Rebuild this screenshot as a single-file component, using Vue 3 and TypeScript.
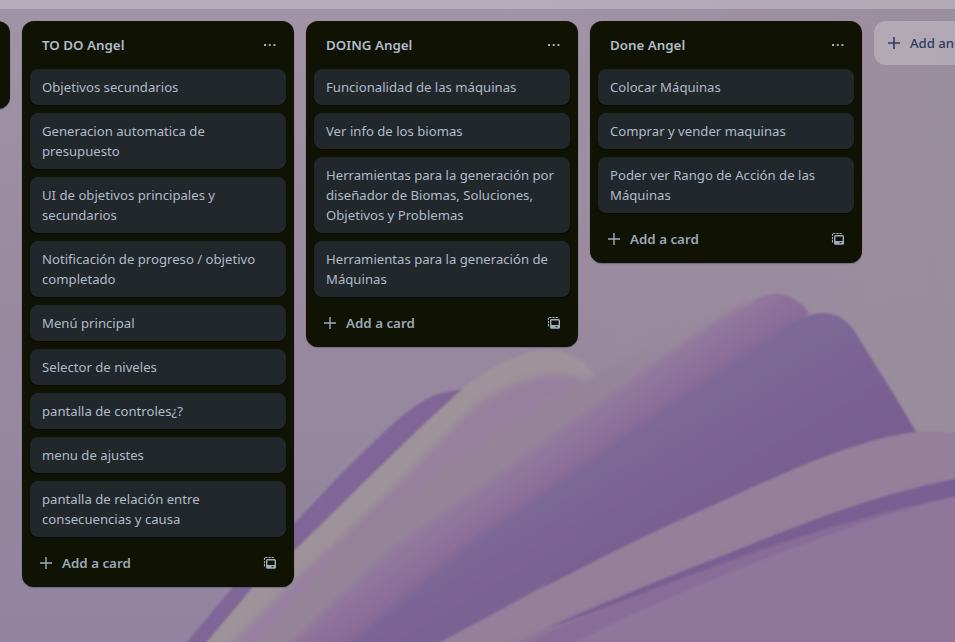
<script setup lang="ts">
interface Card { text: string }
interface List { title: string; cards: Card[] }

const lists: List[] = [
  {
    title: 'TO DO Angel',
    cards: [
      { text: 'Objetivos secundarios' },
      { text: 'Generacion automatica de\npresupuesto' },
      { text: 'UI de objetivos principales y\nsecundarios' },
      { text: 'Notificación de progreso / objetivo\ncompletado' },
      { text: 'Menú principal' },
      { text: 'Selector de niveles' },
      { text: 'pantalla de controles¿?' },
      { text: 'menu de ajustes' },
      { text: 'pantalla de relación entre\nconsecuencias y causa' },
    ],
  },
  {
    title: 'DOING Angel',
    cards: [
      { text: 'Funcionalidad de las máquinas' },
      { text: 'Ver info de los biomas' },
      { text: 'Herramientas para la generación por\ndiseñador de Biomas, Soluciones,\nObjetivos y Problemas' },
      { text: 'Herramientas para la generación de\nMáquinas' },
    ],
  },
  {
    title: 'Done Angel',
    cards: [
      { text: 'Colocar Máquinas' },
      { text: 'Comprar y vender maquinas' },
      { text: 'Poder ver Rango de Acción de las\nMáquinas' },
    ],
  },
]
</script>

<template>
  <div class="page">
    <svg class="wallpaper" viewBox="0 0 955 642" preserveAspectRatio="none" aria-hidden="true">
      <defs>
        <linearGradient id="sky" x1="0" y1="0" x2="0" y2="1">
          <stop offset="0" stop-color="#a194a6" />
          <stop offset=".5" stop-color="#99899f" />
          <stop offset="1" stop-color="#9284a0" />
        </linearGradient>
        <linearGradient id="skyRight" x1="0" y1="0" x2="1" y2="0">
          <stop offset=".55" stop-color="#998c9d" stop-opacity="0" />
          <stop offset="1" stop-color="#998e9d" stop-opacity=".9" />
        </linearGradient>
        <linearGradient id="pink" gradientUnits="userSpaceOnUse" x1="560" y1="430" x2="585" y2="465">
          <stop offset="0" stop-color="#93799e" />
          <stop offset="1" stop-color="#8b6c97" />
        </linearGradient>
        <linearGradient id="violet" gradientUnits="userSpaceOnUse" x1="680" y1="380" x2="750" y2="500">
          <stop offset="0" stop-color="#7e6a97" />
          <stop offset="1" stop-color="#785f90" />
        </linearGradient>
        <linearGradient id="mist" gradientUnits="userSpaceOnUse" x1="590" y1="390" x2="735" y2="290">
          <stop offset="0" stop-color="#958499" />
          <stop offset="1" stop-color="#998a9c" stop-opacity="0" />
        </linearGradient>
        <filter id="soft1" x="-5%" y="-5%" width="110%" height="110%"><feGaussianBlur stdDeviation="1.1" /></filter>
        <filter id="soft3" x="-10%" y="-10%" width="120%" height="120%"><feGaussianBlur stdDeviation="3.5" /></filter>
      </defs>
      <rect width="955" height="642" fill="url(#sky)" />
      <rect width="955" height="642" fill="url(#skyRight)" />
      <path filter="url(#soft1)" fill="#806696" d="M461 390Q440 391 425 400Q402 414 383 433L342 473L300 517L233 587L180 650H210L253 587L300 555L380 485L470 395Z" />
      <path filter="url(#soft1)" fill="#9f929a" d="M200 650L253 587L300 545L363 483L425 423L461 390Q488 367 521 355Q548 345 571 355Q585 361 597 378L570 420L300 650Z" />
      <path filter="url(#soft3)" fill="#97809e" d="M225 650L300 575L342 537L404 477L467 413Q487 396 509 387Q530 376 552 375Q576 374 585 382L620 400L350 650Z" />
      <path filter="url(#soft3)" fill="url(#mist)" d="M250 655L350 538L490 437L590 377L718 304L700 350L610 420L370 630L290 660Z" />
      <path filter="url(#soft3)" fill="url(#pink)" d="M278 655L393 547L488 482L560 430L627 383L670 352L717 320Q750 298 778 297Q796 300 805 314L780 360L360 660Z" />
      <path filter="url(#soft1)" fill="url(#pink)" d="M752 302Q766 293 779 294Q797 296 809 314L785 330Z" />
      <path filter="url(#soft3)" fill="url(#violet)" d="M328 660L466 545L560 480L627 433L693 388L760 342Q790 322 808 320L835 326L870 440L640 530L440 650Z" />
      <path filter="url(#soft1)" fill="url(#violet)" d="M775 338Q800 312 826 313Q844 315 855 332L893 393L918 435L801 480L634 550L520 630L600 490Z" />
      <path filter="url(#soft1)" fill="#957f9a" d="M425 650C520 600 620 545 718 503C790 470 872 432 930 431Q945 431 965 435V660H425Z" />
      <path filter="url(#soft3)" fill="#896c98" d="M500 655C590 606 670 580 760 545C835 515 895 495 965 482V502C880 518 820 544 740 573C680 596 620 622 565 655Z" />
      <path filter="url(#soft1)" fill="#90769b" d="M560 650C630 614 690 589 755 563C825 536 890 511 965 494V660H560Z" />
      <path filter="url(#soft1)" fill="#795e91" d="M545 629C610 600 670 576 760 541C830 513 890 491 965 477V494C890 509 830 527 760 550C670 582 610 607 545 629Z" />
    </svg>

    <div class="topbar"></div>
    <main class="board">
      <section class="list list-previous"></section>
      <section v-for="list in lists" :key="list.title" class="list">
        <header class="list-header">
          <h2>{{ list.title }}</h2>
          <svg class="icon" viewBox="0 0 16 16"><path fill="currentColor" d="M2 7h2v2H2zM6.7 7h2v2h-2zM11.4 7h2v2h-2z" /></svg>
        </header>
        <div class="cards">
          <article v-for="card in list.cards" :key="card.text" class="card">{{ card.text }}</article>
        </div>
        <footer class="list-footer">
          <svg class="icon" viewBox="0 0 16 16"><path stroke="currentColor" stroke-width="1.4" d="M8 2v12M2 8h12" /></svg>
          <span>Add a card</span>
          <svg class="icon template" viewBox="0 0 16 16">
            <path d="M2.5 11.5V2.5H12" fill="none" stroke="currentColor" stroke-width="1.1" stroke-dasharray="2.4 .8" />
            <rect x="4.7" y="4.7" width="8.6" height="8.4" rx=".8" fill="none" stroke="currentColor" stroke-width="1.4" />
            <path d="M4.5 10h9v3h-9z" fill="currentColor" />
            <path d="M9.5 11.2h2v1h-2z" fill="#101204" />
          </svg>
        </footer>
      </section>
      <div class="add-list">
        <svg class="icon" viewBox="0 0 16 16"><path stroke="currentColor" stroke-width="1.6" d="M8 2v12M2 8h12" /></svg>
        <span>Add another list</span>
      </div>
    </main>
  </div>
</template>

<style>
body { overflow: hidden; }
</style>

<style scoped>
.page {
  position: relative;
  width: 955px;
  height: 642px;
  overflow: hidden;
  font-family: "Noto Sans", "Open Sans", sans-serif;
  font-size: 13.15px;
  line-height: 20px;
  color: #b0bbc8;
}
.wallpaper { position: absolute; inset: 0; width: 100%; height: 100%; }
.topbar { position: relative; height: 9px; background: rgba(255, 255, 255, 0.23); }
.board {
  position: relative;
  display: flex;
  align-items: flex-start;
  gap: 12px;
  width: max-content;
  margin-left: -262px;
  padding-top: 12px;
}
.list {
  box-sizing: border-box;
  width: 272px;
  border-radius: 12px;
  background: #101204;
  box-shadow: 0 1px 1px rgba(9, 30, 66, 0.25), 0 0 1px rgba(9, 30, 66, 0.31);
}
.list-previous { height: 88px; }
.list-header {
  display: flex;
  align-items: center;
  justify-content: space-between;
  height: 48px;
  padding: 0 16px 0 20px;
}
h2 { margin: 0; font-size: 13.35px; font-weight: 600; line-height: 20px; }
.icon { display: block; flex: none; width: 16px; height: 16px; color: #9fadbc; }
.cards { display: flex; flex-direction: column; gap: 8px; padding: 0 8px; }
.card {
  padding: 8px 12px;
  border-radius: 8px;
  background: #22272b;
  box-shadow: 0 1px 1px rgba(0, 0, 0, 0.5);
  white-space: pre;
}
.list-footer {
  display: flex;
  align-items: center;
  gap: 8px;
  height: 50px;
  box-sizing: border-box;
  padding: 2px 16px 0;
  color: #9ba9b7;
  font-size: 13.35px;
  font-weight: 600;
}
.template { margin-left: auto; }
.add-list {
  display: flex;
  align-items: center;
  gap: 8px;
  box-sizing: border-box;
  width: 272px;
  height: 44px;
  padding: 0 12px;
  border-radius: 12px;
  background: rgba(255, 255, 255, 0.23);
  color: #2b3e60;
  font-weight: 500;
}
.add-list .icon { color: #2b3e60; }
</style>
